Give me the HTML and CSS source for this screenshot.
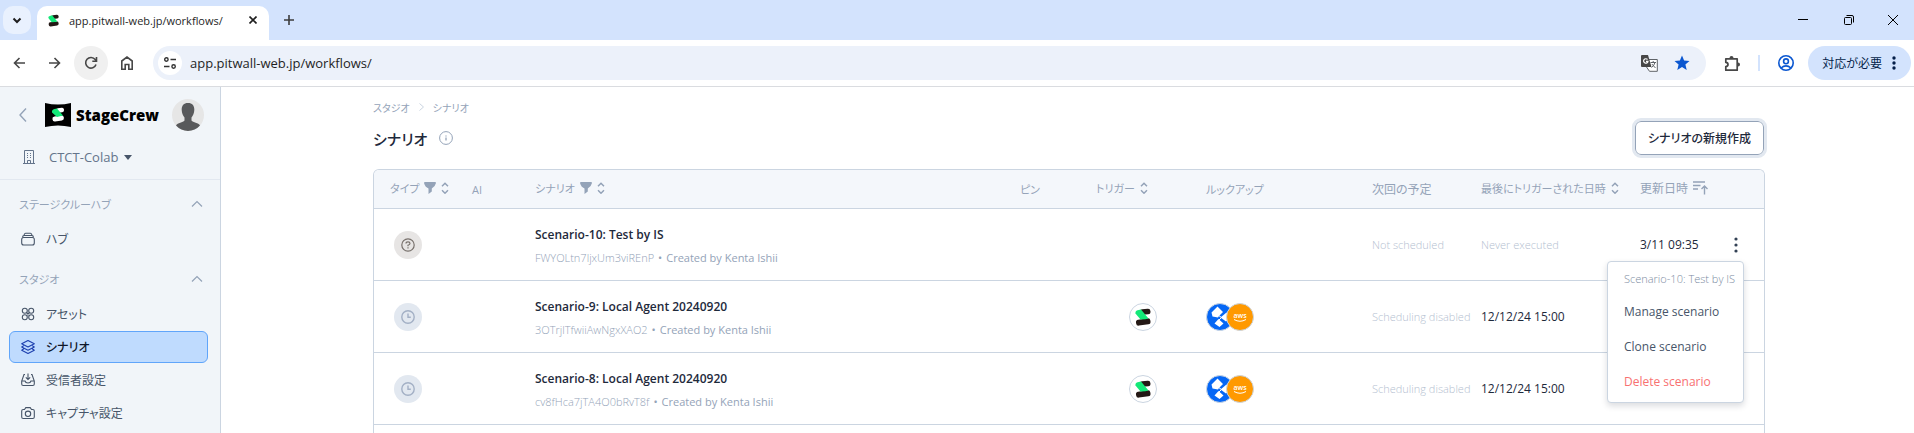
FILE: index.html
```html
<!DOCTYPE html>
<html lang="ja">
  <head>
    <meta charset="UTF-8" />
    <meta name="viewport" content="width=device-width, initial-scale=1.0" />
    <title>app.pitwall-web.jp/workflows/</title>
    <link rel="stylesheet" href="styles.css">
  </head>
  <body>
    <!-- shared shapes -->
    <svg class="defs" width="0" height="0" aria-hidden="true">
      <symbol id="mark" viewBox="0 0 16 18">
        <rect x="5" y="1" width="10.500" height="5.600" rx="2.500" transform="rotate(-6 10 4)" fill="#231815" />
        <rect x="1" y="11" width="14.500" height="6" rx="2.500" transform="rotate(-8 8 14)" fill="#231815" />
        <path d="M0.500 5.500Q0 3 2.500 2.300L6 1.500L13.500 10.500Q11 11.500 5.500 11.500Z" fill="#13e878" />
      </symbol>
      <symbol id="sort" viewBox="0 0 8 12">
        <path d="M1 4.200L4 1.200L7 4.200M1 8.200L4 11.200L7 8.200" fill="none" stroke="#94a3b8" stroke-width="1.500" />
      </symbol>
      <symbol id="filter" viewBox="0 0 12 12">
        <path d="M0 1Q0 0 1 0H11Q12 0 12 1Q11 5 7.800 6.500V9.500L4.500 12V6.500Q1 5 0 1Z" fill="#94a3b8" />
      </symbol>
      <symbol id="up" viewBox="0 0 12 8">
        <path d="M1 6.500L6 1.500L11 6.500" fill="none" stroke="#94a3b8" stroke-width="1.200" />
      </symbol>
      <symbol id="clock" viewBox="0 0 14 14">
        <path d="M7 0.800A6.200 6.200 0 1 1 7 13.200A6.200 6.200 0 1 1 7 0.800M7 3.500V7.200H9.800" fill="none" stroke="#a3b0c5" stroke-width="1.400" />
      </symbol>
      <symbol id="nodes" viewBox="0 0 28 28">
        <circle cx="14" cy="14" r="13.500" fill="#0667f5" stroke="#cbd5e1" />
        <path d="M11.500 3.500L17 9L13 13L12 14.500L6.500 13.500L5.500 9.500ZM20.500 9.500L26 14L20 18.500L14.500 14.500ZM12.500 16L17.500 20.500L13.500 24L8.500 20.500Z" fill="#fff" />
        <path d="M12 12L15.500 14.500L12.500 17.500" fill="none" stroke="#fff" />
      </symbol>
    </svg>

    <div class="tabstrip">
      <button class="tab-search" aria-label="タブを検索">
        <svg width="10" height="7" viewBox="0 0 10 7"><path d="M1.500 1.500L5 5L8.500 1.500" fill="none" stroke="#1f1f1f" stroke-width="2" /></svg>
      </button>
      <div class="tab">
        <svg width="11" height="13"><use href="#mark" /></svg>
        <span class="tab-title">app.pitwall-web.jp/workflows/</span>
        <button class="icon-btn" aria-label="閉じる">
          <svg width="8" height="8" viewBox="0 0 8 8"><path d="M0.500 0.500L7.500 7.500M7.500 0.500L0.500 7.500" stroke="#1f1f1f" stroke-width="1.600" /></svg>
        </button>
      </div>
      <button class="icon-btn new-tab" aria-label="新しいタブ">
        <svg width="10" height="10" viewBox="0 0 10 10"><path d="M5 0V10M0 5H10" stroke="#3c3c3c" stroke-width="1.600" /></svg>
      </button>
      <div class="window-controls">
        <button class="icon-btn" aria-label="最小化"><svg width="10" height="10" viewBox="0 0 10 10"><path d="M0 4.500H10" stroke="#000" /></svg></button>
        <button class="icon-btn" aria-label="元に戻す"><svg width="10" height="10" viewBox="0 0 10 10"><path d="M2.500 0.500H8Q9.500 0.500 9.500 2V7.500" fill="none" stroke="#000" /><rect x="0.500" y="2.500" width="7" height="7" rx="1" fill="none" stroke="#000" /></svg></button>
        <button class="icon-btn" aria-label="閉じる"><svg width="10" height="10" viewBox="0 0 10 10"><path d="M0 0L10 10M10 0L0 10" stroke="#000" /></svg></button>
      </div>
    </div>

    <div class="toolbar">
      <button class="nav-btn" aria-label="戻る"><svg width="12" height="12" viewBox="0 0 12 12"><path d="M12 6H1.500M6.500 1L1.500 6L6.500 11" fill="none" stroke="#474747" stroke-width="1.600" /></svg></button>
      <button class="nav-btn" aria-label="進む"><svg width="12" height="12" viewBox="0 0 12 12"><path d="M0 6H10.500M5.500 1L10.500 6L5.500 11" fill="none" stroke="#474747" stroke-width="1.600" /></svg></button>
      <button class="nav-btn reload" aria-label="再読み込み"><svg width="14" height="14" viewBox="0 0 14 14"><path d="M12 8.500A5.300 5.300 0 1 1 11.200 3.600L12.500 5M12.500 1V5.200H8.300" fill="none" stroke="#474747" stroke-width="1.600" /></svg></button>
      <button class="nav-btn" aria-label="ホーム"><svg width="14" height="14" viewBox="0 0 14 14"><path d="M1.800 5L7 1L12.200 5V13.200H8.800V8.500H5.200V13.200H1.800Z" fill="none" stroke="#474747" stroke-width="1.600" /></svg></button>
      <div class="omnibox">
        <button class="site-info" aria-label="サイト情報"><svg width="12" height="12" viewBox="0 0 12 12"><path d="M6.500 2.500H12M0 9.500H5.500" stroke="#333" stroke-width="1.500" /><circle cx="2.400" cy="2.500" r="1.700" fill="none" stroke="#333" stroke-width="1.400" /><circle cx="9.600" cy="9.500" r="1.700" fill="none" stroke="#333" stroke-width="1.400" /></svg></button>
        <input class="url" type="text" value="app.pitwall-web.jp/workflows/" aria-label="アドレス" />
        <button class="icon-btn" aria-label="翻訳">
          <svg width="17" height="17" viewBox="0 0 17 17"><path d="M7 4.500H16.300V16.300H8.500L5.500 12" fill="#fff" stroke="#5f6368" /><path d="M1 0H7L10.500 12H1Q0 12 0 11V1Q0 0 1 0Z" fill="#474747" /><path d="M6.500 4.500A2.200 2.200 0 1 0 7 6.300H5" fill="none" stroke="#fff" stroke-width="1.200" /><path d="M9.500 7.500H15M12.200 6V7.500M14 7.500Q13 11 10.500 12.500M10.800 9L14.500 13" fill="none" stroke="#5f6368" /></svg>
        </button>
        <button class="icon-btn" aria-label="ブックマーク">
          <svg width="16" height="16" viewBox="0 0 16 16"><path d="M8 0.500L10.100 5.500L15.500 6L11.400 9.600L12.700 15L8 12.100L3.300 15L4.600 9.600L0.500 6L5.900 5.500Z" fill="#0b57d0" /></svg>
        </button>
      </div>
      <button class="icon-btn extensions" aria-label="拡張機能">
        <svg width="17" height="17" viewBox="0 0 17 17"><path d="M1.800 3.800H13.200V15.200H1.800V11.600Q4 11.400 4 9.500Q4 7.600 1.800 7.400Z" fill="none" stroke="#474747" stroke-width="1.700" stroke-linejoin="round" /><path d="M5.500 3A2 2 0 0 1 9.500 3ZM14 7.500A2 2 0 0 1 14 11.500Z" fill="#474747" /></svg>
      </button>
      <span class="separator"></span>
      <button class="icon-btn profile" aria-label="プロフィール">
        <svg width="16" height="16" viewBox="0 0 16 16" fill="none" stroke="#0b57d0" stroke-width="1.600"><circle cx="8" cy="8" r="7.200" /><circle cx="8" cy="6.300" r="2.400" /><path d="M3 13Q8 8.800 13 13" /></svg>
      </button>
      <button class="action-pill">対応が必要
        <svg width="4" height="14" viewBox="0 0 4 14" fill="#041e49"><circle cx="2" cy="2" r="1.700" /><circle cx="2" cy="7" r="1.700" /><circle cx="2" cy="12" r="1.700" /></svg>
      </button>
    </div>

    <div class="app">
      <aside class="sidebar">
        <div class="sidebar-head">
          <div class="brand">
            <button class="icon-btn back" aria-label="サイドバーを閉じる"><svg width="8" height="14" viewBox="0 0 8 14"><path d="M7 0.500L1 7L7 13.500" fill="none" stroke="#94a3b8" stroke-width="1.400" /></svg></button>
            <svg class="brand-logo" width="26" height="24" viewBox="0 0 26 24">
              <path d="M0 0Q13 3 26 0V24Q13 21 0 24Z" fill="#000" />
              <rect x="11" y="5" width="8" height="4.500" rx="2" transform="rotate(-6 15 7)" fill="#fff" />
              <rect x="7.500" y="13" width="11.500" height="5" rx="2.300" transform="rotate(-8 13 16)" fill="#fff" />
              <path d="M7 9.500Q6.500 6.500 9.500 6L12 5.500L18 12.500L12 14Z" fill="#13e878" />
            </svg>
            <span class="brand-name">StageCrew</span>
            <svg class="avatar" width="32" height="32" viewBox="0 0 32 32">
              <circle cx="16" cy="16" r="16" fill="#e6e6e6" />
              <path d="M16 4C20.500 4 22.500 7 22.300 11C22.200 14 21 17 19.500 18.500V21.500C21 23.500 26.500 23.500 28 26.500A16 16 0 0 1 4 26.500C5.500 23.500 11 23.500 12.500 21.500V18.500C11 17 9.800 14 9.700 11C9.500 7 11.500 4 16 4Z" fill="#58595b" />
            </svg>
          </div>
          <button class="org">
            <svg width="12" height="14" viewBox="0 0 12 14" fill="none" stroke="#64748b"><path d="M0 13.500H12M1.500 13.500V0.500H10.500V13.500M4.500 13.500V10.500H7.500V13.500" /><path d="M4 3.500H5M7 3.500H8M4 5.500H5M7 5.500H8M4 7.500H5M7 7.500H8" /></svg>
            <span>CTCT-Colab</span>
            <svg width="8" height="5" viewBox="0 0 8 5"><path d="M0 0H8L4 5Z" fill="#475569" /></svg>
          </button>
        </div>

        <nav class="menu">
          <div class="menu-group">
            <button class="menu-title">ステージクルーハブ <svg width="12" height="8"><use href="#up" /></svg></button>
            <a class="menu-item" href="#">
              <svg width="14" height="14" viewBox="0 0 14 14" fill="none" stroke="#475569" stroke-width="1.100"><rect x="0.700" y="5.500" width="12.600" height="7.500" rx="2" /><path d="M1.500 5.500Q1.700 3.500 3 3.500H11Q12.300 3.500 12.500 5.500M3 3.300Q3.300 1.200 4.500 1.200H9.500Q10.700 1.200 11 3.300" /></svg>
              ハブ</a>
          </div>
          <div class="menu-group">
            <button class="menu-title">スタジオ <svg width="12" height="8"><use href="#up" /></svg></button>
            <a class="menu-item" href="#">
              <svg width="14" height="14" viewBox="0 0 14 14" fill="none" stroke="#475569" stroke-width="1.100"><circle cx="3.800" cy="3.800" r="2.500" /><circle cx="10.200" cy="3.800" r="2.500" /><circle cx="3.800" cy="10.200" r="2.500" /><circle cx="10.200" cy="10.200" r="2.500" /><path d="M5.500 5.500L8.500 8.500M8.500 5.500L5.500 8.500" /></svg>
              アセット</a>
            <a class="menu-item active" href="#">
              <svg width="14" height="14" viewBox="0 0 14 14" fill="none" stroke="#1e40af" stroke-width="1.100" stroke-linejoin="round"><path d="M7 0.600L13.300 3.800L7 7L0.700 3.800ZM2.800 5.600L0.700 7L7 10.200L13.300 7L11.200 5.600M2.800 8.800L0.700 10.200L7 13.400L13.300 10.200L11.200 8.800" /></svg>
              シナリオ</a>
            <a class="menu-item" href="#">
              <svg width="14" height="14" viewBox="0 0 14 14" fill="none" stroke="#475569" stroke-width="1.100"><path d="M4 1.500H3L0.700 8V11Q0.700 12.500 2.200 12.500H11.800Q13.300 12.500 13.300 11V8L11 1.500H10M0.700 8H4Q4.500 10 7 10Q9.500 10 10 8H13.300M7 0.500V6.500M4.800 4.300L7 6.500L9.200 4.300" /></svg>
              受信者設定</a>
            <a class="menu-item" href="#">
              <svg width="14" height="14" viewBox="0 0 14 14" fill="none" stroke="#475569" stroke-width="1.100"><path d="M2.200 3.500H3.500L4.800 1.600H9.200L10.500 3.500H11.800Q13.300 3.500 13.300 5V11Q13.300 12.500 11.800 12.500H2.200Q0.700 12.500 0.700 11V5Q0.700 3.500 2.200 3.500Z" /><circle cx="7" cy="7.800" r="2.700" /></svg>
              キャプチャ設定</a>
          </div>
        </nav>
      </aside>

      <main class="content">
        <div class="breadcrumb">
          <a href="#">スタジオ</a>
          <svg width="5" height="8" viewBox="0 0 5 8"><path d="M0.500 0.500L4.500 4L0.500 7.500" fill="none" stroke="#cbd5e1" /></svg>
          <a href="#">シナリオ</a>
        </div>
        <div class="page-head">
          <h1>シナリオ</h1>
          <svg width="14" height="14" viewBox="0 0 14 14" fill="none" stroke="#94a3b8"><circle cx="7" cy="7" r="6.400" /><path d="M7 6.500V9.500M7 4.500V5.500" stroke-width="1.300" /></svg>
          <button class="create">シナリオの新規作成</button>
        </div>

        <div class="table-wrap">
          <table class="scenarios">
            <colgroup>
              <col class="c-type"><col class="c-ai"><col><col class="c-pin"><col class="c-trigger">
              <col class="c-lookup"><col class="c-next"><col class="c-last"><col class="c-updated"><col class="c-more">
            </colgroup>
            <thead>
              <tr>
                <th><span class="head">タイプ <svg width="12" height="12"><use href="#filter" /></svg><svg width="8" height="12"><use href="#sort" /></svg></span></th>
                <th>AI</th>
                <th><span class="head">シナリオ <svg width="12" height="12"><use href="#filter" /></svg><svg width="8" height="12"><use href="#sort" /></svg></span></th>
                <th>ピン</th>
                <th><span class="head">トリガー <svg width="8" height="12"><use href="#sort" /></svg></span></th>
                <th>ルックアップ</th>
                <th class="wide">次回の予定</th>
                <th><span class="head">最後にトリガーされた日時 <svg width="8" height="12"><use href="#sort" /></svg></span></th>
                <th class="wide"><span class="head">更新日時 <svg width="15" height="14" viewBox="0 0 15 14" fill="none" stroke="#94a3b8" stroke-width="1.400"><path d="M0 1H12M0 4.500H7.500M0 8H5M11.500 13.500V5M8.500 8L11.500 5L14.500 8" /></svg></span></th>
                <th></th>
              </tr>
            </thead>
            <tbody>
              <tr>
                <td class="type"><span class="badge manual"><svg width="14" height="14" viewBox="0 0 14 14" fill="none" stroke="#78716c" stroke-width="1.200"><circle cx="7" cy="7" r="6.200" /><path d="M5 5.500Q5 3.800 7 3.800Q9 3.800 9 5.400Q9 6.500 7 7.200V8.300M7 9.300V10.500" /></svg></span></td>
                <td></td>
                <td><div class="name">Scenario-10: Test by IS</div><div class="meta"><span class="id">FWYOLtn7ljxUm3viREnP</span><span class="dot">•</span>Created by Kenta Ishii</div></td>
                <td></td>
                <td></td>
                <td></td>
                <td class="muted">Not scheduled</td>
                <td class="muted">Never executed</td>
                <td>3/11 09:35</td>
                <td class="more">
                  <button class="icon-btn" aria-label="メニュー"><svg width="4" height="16" viewBox="0 0 4 16" fill="#334155"><circle cx="2" cy="2" r="1.600" /><circle cx="2" cy="8" r="1.600" /><circle cx="2" cy="14" r="1.600" /></svg></button>
                  <div class="popup">
                    <div class="popup-title">Scenario-10: Test by IS</div>
                    <button class="popup-item">Manage scenario</button>
                    <button class="popup-item">Clone scenario</button>
                    <button class="popup-item danger">Delete scenario</button>
                  </div>
                </td>
              </tr>
              <tr>
                <td class="type"><span class="badge"><svg width="14" height="14"><use href="#clock" /></svg></span></td>
                <td></td>
                <td><div class="name">Scenario-9: Local Agent 20240920</div><div class="meta"><span class="id">3OTrjlTfwiiAwNgxXAO2</span><span class="dot">•</span>Created by Kenta Ishii</div></td>
                <td></td>
                <td><span class="badge app-badge"><svg width="16" height="18"><use href="#mark" /></svg></span></td>
                <td><span class="stack"><svg width="28" height="28"><use href="#nodes" /></svg><svg width="28" height="28" viewBox="0 0 28 28"><circle cx="14" cy="14" r="13.500" fill="#ff9900" stroke="#cbd5e1" /><text x="14" y="15" text-anchor="middle" class="aws-text">aws</text><path d="M8 16.500Q14 20 20 16.500" fill="none" stroke="#fff" /></svg></span></td>
                <td class="muted">Scheduling disabled</td>
                <td>12/12/24 15:00</td>
                <td></td>
                <td></td>
              </tr>
              <tr>
                <td class="type"><span class="badge"><svg width="14" height="14"><use href="#clock" /></svg></span></td>
                <td></td>
                <td><div class="name">Scenario-8: Local Agent 20240920</div><div class="meta"><span class="id">cv8fHca7jTA4O0bRvT8f</span><span class="dot">•</span>Created by Kenta Ishii</div></td>
                <td></td>
                <td><span class="badge app-badge"><svg width="16" height="18"><use href="#mark" /></svg></span></td>
                <td><span class="stack"><svg width="28" height="28"><use href="#nodes" /></svg><svg width="28" height="28" viewBox="0 0 28 28"><circle cx="14" cy="14" r="13.500" fill="#ff9900" stroke="#cbd5e1" /><text x="14" y="15" text-anchor="middle" class="aws-text">aws</text><path d="M8 16.500Q14 20 20 16.500" fill="none" stroke="#fff" /></svg></span></td>
                <td class="muted">Scheduling disabled</td>
                <td>12/12/24 15:00</td>
                <td></td>
                <td></td>
              </tr>
            </tbody>
          </table>
        </div>
      </main>
    </div>
  </body>
</html>
```

FILE: styles.css
```css
* {
  box-sizing: border-box;
}
body {
  margin: 0;
  height: 100vh;
  overflow: hidden;
  display: flex;
  flex-direction: column;
  background: #fff;
  color: #1e293b;
  font-family: "Open Sans", "Noto Sans CJK JP", sans-serif;
  font-size: 12px;
  font-feature-settings: "palt";
}
button,
input {
  font: inherit;
  font-feature-settings: inherit;
  color: inherit;
  border: none;
  background: none;
  padding: 0;
  margin: 0;
}
button {
  cursor: pointer;
}
a {
  color: inherit;
  text-decoration: none;
}
svg {
  display: block;
  flex: none;
}
.defs {
  position: absolute;
}
.icon-btn {
  display: flex;
  align-items: center;
  justify-content: center;
}

/* browser frame */
.tabstrip {
  flex: none;
  display: flex;
  align-items: center;
  height: 40px;
  padding-left: 3px;
  background: #d3e3fd;
}
.tab-search {
  display: flex;
  align-items: center;
  justify-content: center;
  width: 28px;
  height: 28px;
  border-radius: 10px;
  background: #e9f1fe;
}
.tab {
  display: flex;
  align-items: center;
  align-self: flex-end;
  gap: 10px;
  width: 232px;
  height: 34px;
  margin-left: 6px;
  padding: 0 12px 6px 11px;
  border-radius: 10px 10px 0 0;
  background: #fff;
}
.tab-title {
  flex: 1;
  color: #1f1f1f;
  font-size: 11px;
  white-space: nowrap;
}
.new-tab {
  margin-left: 15px;
}
.window-controls {
  display: flex;
  align-self: stretch;
  margin-left: auto;
}
.window-controls .icon-btn {
  width: 46px;
}
.window-controls .icon-btn:last-child {
  width: 42px;
}
.toolbar {
  flex: none;
  display: flex;
  align-items: center;
  height: 47px;
  padding: 0 3px 0 2px;
  border-bottom: 1px solid #dadce0;
}
.nav-btn {
  display: flex;
  align-items: center;
  justify-content: center;
  width: 34px;
  height: 34px;
  margin-right: 2px;
  border-radius: 50%;
}
.reload {
  background: #f0f0f0;
}
.omnibox {
  flex: 1;
  display: flex;
  align-items: center;
  gap: 16px;
  height: 34px;
  margin-left: 7px;
  padding: 0 16px 0 5px;
  border-radius: 17px;
  background: #ecf1fa;
}
.site-info {
  display: flex;
  align-items: center;
  justify-content: center;
  width: 24px;
  height: 24px;
  border-radius: 50%;
  background: #fff;
}
.url {
  flex: 1;
  margin-left: -8px;
  color: #1f1f1f;
  font-size: 13px;
}
.extensions {
  margin-left: 18px;
}
.separator {
  width: 2px;
  height: 16px;
  margin: 0 18px 0 17px;
  background: #d3e3fd;
}
.action-pill {
  display: flex;
  align-items: center;
  gap: 10px;
  height: 34px;
  margin-left: 14px;
  padding: 0 15px 0 14px;
  border-radius: 17px;
  background: #d3e3fd;
  color: #041e49;
}

/* sidebar */
.app {
  flex: 1;
  display: flex;
  min-height: 0;
}
.sidebar {
  flex: none;
  width: 221px;
  border-right: 1px solid #cbd5e1;
  background: #f1f5f9;
}
.sidebar-head {
  padding: 12px 16px 12px 19px;
  border-bottom: 1px solid #e2e8f0;
}
.brand {
  display: flex;
  align-items: center;
}
.brand-logo {
  margin: 0 5px 0 18px;
}
.brand-name {
  color: #000;
  font-size: 15px;
  font-weight: 800;
}
.avatar {
  margin-left: auto;
}
.org {
  display: flex;
  align-items: center;
  gap: 6px;
  height: 20px;
  margin: 16px 0 0 4px;
  color: #64748b;
  font-size: 13px;
}
.org span {
  margin-left: 8px;
}
.menu {
  padding: 8px 12px 0 9px;
  font-size: 12px;
}
.menu-group {
  display: flex;
  flex-direction: column;
  gap: 1px;
  margin-bottom: 8px;
}
.menu-title {
  display: flex;
  align-items: center;
  justify-content: space-between;
  height: 32px;
  margin-bottom: 2px;
  padding: 0 5px 0 10px;
  color: #94a3b8;
  font-size: 11px;
}
.menu-item {
  display: flex;
  align-items: center;
  gap: 11px;
  height: 32px;
  padding: 0 11px;
  border: 1px solid transparent;
  border-radius: 6px;
  color: #475569;
}
.menu-item.active {
  border-color: #60a5fa;
  background: #bfdbfe;
  color: #0f172a;
  font-weight: 500;
}

/* main area */
.content {
  flex: 1;
  display: flex;
  flex-direction: column;
  min-width: 0;
  padding: 11px 149px 0 152px;
}
.breadcrumb {
  display: flex;
  align-items: center;
  gap: 9px;
  height: 18px;
  color: #94a3b8;
  font-size: 10px;
}
.page-head {
  display: flex;
  align-items: center;
  gap: 12px;
  margin: 5px 1px 14px 0;
}
h1 {
  margin: 0;
  font-size: 15px;
  font-weight: 500;
}
.create {
  height: 34px;
  margin-left: auto;
  padding: 0 12px;
  border: 1px solid #94a3b8;
  border-radius: 6px;
  outline: 3px solid #e2e8f0;
  background: #fff;
  font-size: 12px;
  font-weight: 500;
}
.table-wrap {
  flex: 1;
  overflow: hidden;
  border: 1px solid #cbd5e1;
  border-bottom: none;
  border-radius: 6px 6px 0 0;
}
.scenarios {
  width: 100%;
  table-layout: fixed;
  border-collapse: separate;
  border-spacing: 0;
}
.c-type { width: 82px; }
.c-ai { width: 63px; }
.c-pin { width: 76px; }
.c-trigger { width: 110px; }
.c-lookup { width: 166px; }
.c-next { width: 109px; }
.c-last { width: 159px; }
.c-updated { width: 96px; }
.c-more { width: 44px; }
th {
  height: 39px;
  padding: 0 0 0 16px;
  border-bottom: 1px solid #cbd5e1;
  background: #f4f7fb;
  color: #94a3b8;
  font-size: 11px;
  font-weight: 400;
  text-align: left;
  white-space: nowrap;
}
.wide {
  font-size: 12px;
}
.head {
  display: flex;
  align-items: center;
  gap: 5px;
  padding-bottom: 2px;
}
td {
  height: 72px;
  padding: 0 0 0 16px;
  border-bottom: 1px solid #cbd5e1;
  font-size: 12px;
  white-space: nowrap;
}
.type {
  padding-left: 20px;
}
.name {
  padding-top: 2px;
  font-weight: 600;
  line-height: 24px;
}
.meta {
  color: #94a3b8;
  font-size: 11px;
  line-height: 22px;
}
.id {
  font-weight: 300;
}
.dot {
  margin: 0 4px;
}
.muted {
  color: #b4c0d0;
  font-size: 11px;
  font-weight: 300;
}
.badge {
  display: flex;
  align-items: center;
  justify-content: center;
  width: 28px;
  height: 28px;
  border-radius: 50%;
  background: #e2e8f0;
}
.manual {
  background: #e7e5e4;
}
.app-badge {
  margin: 0 auto;
  border: 1px solid #cbd5e1;
  background: #fff;
}
.stack {
  display: flex;
}
.stack svg + svg {
  margin-left: -8px;
}
.aws-text {
  fill: #fff;
  font-size: 7px;
  font-weight: 600;
}
.more {
  position: relative;
  padding-left: 14px;
}
.more > .icon-btn {
  padding: 4px 0;
}
.popup {
  position: absolute;
  z-index: 1;
  top: 52px;
  right: 20px;
  width: 137px;
  padding: 1px 0 3px;
  border: 1px solid #cbd5e1;
  border-radius: 4px;
  background: #fff;
  box-shadow: 0 3px 6px rgba(15, 23, 42, 0.15);
}
.popup-title,
.popup-item {
  display: block;
  width: 100%;
  padding: 0 16px;
  text-align: left;
  line-height: 35px;
}
.popup-title {
  color: #7c8ba1;
  font-size: 11px;
  font-weight: 300;
  line-height: 31px;
}
.popup-item {
  color: #475569;
}
.danger {
  color: #f87171;
}
```
